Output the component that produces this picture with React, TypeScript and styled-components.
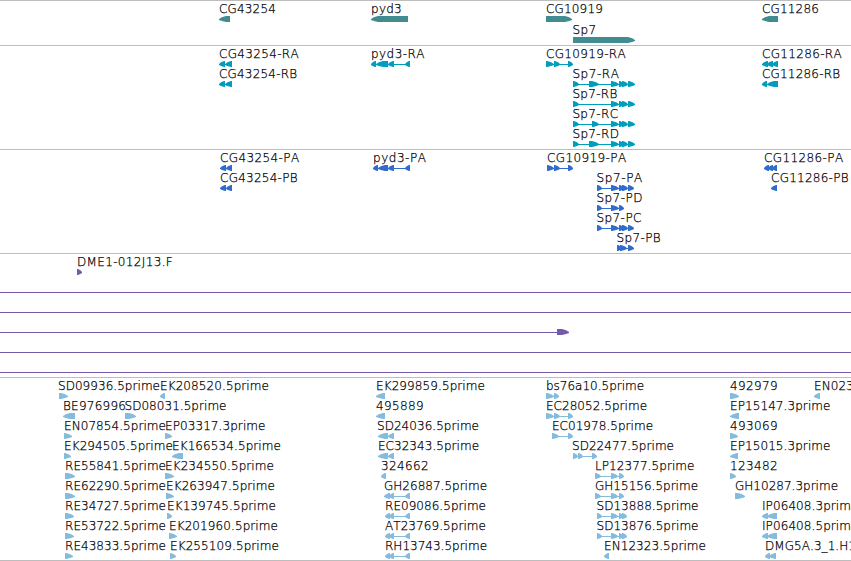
import React from "react";
import styled, { createGlobalStyle } from "styled-components";

type Direction = "left" | "right";
type Exon = [number, number];

interface Feature {
  name?: string;
  at: number;
  dir: Direction;
  exons: Exon[];
  lineFrom?: number;
}

interface TrackData {
  id: string;
  color: string;
  height: number;
  pitch: number;
  rows: Feature[][];
}

const VIEW_WIDTH = 851;

const f = (name: string, at: number, dir: Direction, exons: Exon[]): Feature => ({
  name,
  at,
  dir,
  exons,
});

const through: Feature = { at: 0, dir: "right", exons: [], lineFrom: 0 };

const tracks: TrackData[] = [
  {
    id: "gene",
    color: "#408c91",
    height: 45,
    pitch: 21,
    rows: [
      [
        f("CG43254", 219, "left", [[219, 230]]),
        f("pyd3", 371, "left", [[371, 408]]),
        f("CG10919", 546, "right", [[546, 572]]),
        f("CG11286", 762, "left", [[762, 778]]),
      ],
      [f("Sp7", 572.4, "right", [[573, 635]])],
    ],
  },
  {
    id: "transcript",
    color: "#009dbc",
    height: 104,
    pitch: 20,
    rows: [
      [
        f("CG43254-RA", 219, "left", [[219, 225], [225, 232]]),
        f("pyd3-RA", 371, "left", [[371, 376], [376, 388], [388, 394], [405, 410]]),
        f("CG10919-RA", 546, "right", [[546, 554], [554, 560], [568, 573]]),
        f("CG11286-RA", 762, "left", [[762, 768], [767, 773], [772, 778]]),
      ],
      [
        f("CG43254-RB", 219, "left", [[219, 225], [225, 232]]),
        f("Sp7-RA", 572.4, "right", [[573, 579], [589, 599], [611, 619], [619, 624], [622, 628], [628, 635]]),
        f("CG11286-RB", 762, "left", [[762, 767], [767, 778]]),
      ],
      [f("Sp7-RB", 572.4, "right", [[573, 579], [611, 619], [619, 624], [622, 628], [628, 635]])],
      [f("Sp7-RC", 572.4, "right", [[573, 579], [592, 599], [611, 619], [619, 624], [622, 628], [628, 635]])],
      [f("Sp7-RD", 572.4, "right", [[573, 579], [589, 599], [611, 619], [619, 624], [622, 628], [628, 635]])],
    ],
  },
  {
    id: "protein",
    color: "#316bcb",
    height: 104,
    pitch: 20,
    rows: [
      [
        f("CG43254-PA", 220, "left", [[220, 226], [226, 232]]),
        f("pyd3-PA", 373, "left", [[373, 378], [378, 388], [388, 394], [405, 410]]),
        f("CG10919-PA", 547, "right", [[547, 554], [554, 560], [568, 573]]),
        f("CG11286-PA", 764, "left", [[764, 769], [768, 773], [772, 777]]),
      ],
      [
        f("CG43254-PB", 220, "left", [[220, 226], [226, 232]]),
        f("Sp7-PA", 596.4, "right", [[597, 602], [611, 619], [619, 624], [622, 628], [628, 634]]),
        f("CG11286-PB", 771, "left", [[771, 777]]),
      ],
      [f("Sp7-PD", 596.4, "right", [[597, 602], [611, 619], [619, 624]])],
      [f("Sp7-PC", 596.4, "right", [[597, 602], [611, 619], [619, 624], [622, 628], [628, 634]])],
      [f("Sp7-PB", 616.4, "right", [[617, 622], [620, 627], [628, 634]])],
    ],
  },
  {
    id: "bac",
    color: "#7659aa",
    height: 124,
    pitch: 20,
    rows: [
      [f("DME1-012J13.F", 77, "right", [[77, 82]])],
      [through],
      [through],
      [{ at: 0, dir: "right", exons: [[557, 569]], lineFrom: 0 }],
      [through],
      [through],
    ],
  },
  {
    id: "est",
    color: "#85bbdd",
    height: 183,
    pitch: 20,
    rows: [
      [
        f("SD09936.5prime", 58, "right", [[59, 68]]),
        f("EK208520.5prime", 160, "left", [[160, 165]]),
        f("EK299859.5prime", 376, "left", [[376, 385]]),
        f("bs76a10.5prime", 546, "right", [[546, 554], [554, 559]]),
        f("492979", 730, "right", [[730, 739]]),
        f("EN02344.3prime", 814, "left", [[814, 820]]),
      ],
      [
        f("BE976996", 63, "left", [[63, 75]]),
        f("SD08031.5prime", 124.5, "right", [[125, 136]]),
        f("495889", 376, "left", [[376, 385]]),
        f("EC28052.5prime", 546, "right", [[546, 554], [554, 560], [568, 573]]),
        f("EP15147.3prime", 730, "left", [[730, 739]]),
      ],
      [
        f("EN07854.5prime", 64, "right", [[64, 72]]),
        f("EP03317.3prime", 165, "right", [[165, 172]]),
        f("SD24036.5prime", 377, "left", [[378, 388], [388, 394]]),
        f("EC01978.5prime", 552, "right", [[552, 559], [568, 573]]),
        f("493069", 730, "right", [[730, 738]]),
      ],
      [
        f("EK294505.5prime", 64, "right", [[64, 71]]),
        f("EK166534.5prime", 172, "left", [[172, 183]]),
        f("EC32343.5prime", 378, "left", [[378, 388], [388, 394]]),
        f("SD22477.5prime", 572, "right", [[573, 578], [578, 583], [592, 597]]),
        f("EP15015.3prime", 730, "left", [[730, 738]]),
      ],
      [
        f("RE55841.5prime", 65, "right", [[65, 75]]),
        f("EK234550.5prime", 165, "right", [[165, 174]]),
        f("324662", 381, "left", [[381, 386]]),
        f("LP12377.5prime", 595, "right", [[595, 601], [611, 618], [619, 624]]),
        f("123482", 730, "right", [[730, 736]]),
      ],
      [
        f("RE62290.5prime", 65, "right", [[65, 75]]),
        f("EK263947.5prime", 166, "right", [[166, 174]]),
        f("GH26887.5prime", 384, "left", [[384, 390], [389, 394], [405, 410]]),
        f("GH15156.5prime", 595, "right", [[595, 601], [611, 618], [619, 624]]),
        f("GH10287.3prime", 735, "right", [[735, 745]]),
      ],
      [
        f("RE34727.5prime", 65, "right", [[65, 74]]),
        f("EK139745.5prime", 167, "right", [[167, 172]]),
        f("RE09086.5prime", 385, "left", [[385, 390], [389, 394], [405, 410]]),
        f("SD13888.5prime", 596.5, "right", [[597, 602], [611, 618], [619, 623], [622, 627]]),
        f("IP06408.3prime", 762, "left", [[762, 768], [767, 777]]),
      ],
      [
        f("RE53722.5prime", 65, "right", [[65, 74]]),
        f("EK201960.5prime", 169, "right", [[169, 177]]),
        f("AT23769.5prime", 385, "left", [[385, 390], [389, 394], [405, 410]]),
        f("SD13876.5prime", 596.5, "right", [[597, 602], [611, 618], [619, 623], [622, 627]]),
        f("IP06408.5prime", 762, "left", [[762, 768], [767, 777]]),
      ],
      [
        f("RE43833.5prime", 65, "right", [[65, 73]]),
        f("EK255109.5prime", 170, "right", [[170, 176]]),
        f("RH13743.5prime", 385, "left", [[385, 390], [389, 394], [405, 410]]),
        f("EN12323.5prime", 604, "left", [[604, 609]]),
        f("DMG5A.3_1.H1", 765, "left", [[765, 770], [769, 776]]),
      ],
    ],
  },
];

const GlobalStyle = createGlobalStyle`
  html, body {
    margin: 0;
    background: #fff;
    overflow: hidden;
  }
`;

const Viewer = styled.main`
  display: flex;
  flex-direction: column;
  width: ${VIEW_WIDTH}px;
  height: 561px;
  overflow: hidden;
  background: #fff;
  border-bottom: 1px solid #bdbdbd;
  box-sizing: border-box;
  font-family: "DejaVu Sans", sans-serif;
  font-size: 12px;
  font-weight: 200;
  font-kerning: none;
  color: #000;
`;

const Track = styled.section<{ $height: number; $color: string }>`
  flex: none;
  box-sizing: border-box;
  height: ${(p) => p.$height}px;
  border-top: 1px solid #bdbdbd;
  color: ${(p) => p.$color};
`;

const Row = styled.div<{ $pitch: number }>`
  position: relative;
  height: ${(p) => p.$pitch}px;
`;

const FeatureBox = styled.div<{ $x: number }>`
  position: absolute;
  left: ${(p) => p.$x}px;
  top: 0;
  display: flex;
  flex-direction: column;
`;

const Label = styled.span<{ $spacing: number; $shift: number }>`
  box-sizing: border-box;
  height: 15px;
  padding-top: 1px;
  padding-left: ${(p) => p.$shift}px;
  line-height: 15px;
  white-space: pre;
  color: #000;
  -webkit-text-stroke: 0.25px #000;
  letter-spacing: ${(p) => p.$spacing}px;
`;

const Glyph = styled.svg`
  display: block;
  overflow: visible;
`;

const ADVANCE: Record<string, [number, number]> = {
  "-": [6, 4.33], ".": [4, 3.81], _: [5, 6], A: [9, 8.21], B: [7.6, 8.23], C: [8, 8.38], D: [9, 9.24],
  E: [8, 7.58], F: [7, 6.9], G: [9, 9.3], H: [9, 9.02], I: [4, 3.54], J: [4, 3.54], K: [8, 7.87],
  L: [7, 6.69], M: [10, 10.36], N: [9, 8.98], P: [7.5, 7.24], R: [8, 8.34], S: [8, 7.62], T: [7, 7.33],
  a: [7, 7.35], b: [8, 7.62], d: [8, 7.62], e: [7, 7.38], i: [3, 3.33], m: [10, 11.69], p: [8, 7.62],
  r: [5, 4.93], s: [6, 6.25], y: [7, 7.1],
};

function spacingFor(text: string): number {
  let diff = 0;
  for (const ch of text) {
    const [hinted, natural] = ADVANCE[ch] ?? [8, 7.63];
    diff += hinted - natural;
  }
  return Math.round((diff / text.length) * 1000) / 1000;
}

function exonPath([start, end]: Exon, dir: Direction, origin: number): string {
  const a = start - origin;
  const b = end - origin;
  const head = Math.min(b - a - 1, 7);
  const shoulder = head * 0.4;
  if (dir === "right") {
    return `M${a} 0H${b - head}L${b - shoulder} 1.3L${b} 3V4L${b - shoulder} 5L${b - head} 6H${a}Z`;
  }
  return `M${b} 0H${a + head}L${a + shoulder} 1.3L${a} 3V4L${a + shoulder} 5L${a + head} 6H${b}Z`;
}

function FeatureView({ feature }: { feature: Feature }) {
  const { name, at, dir, exons, lineFrom } = feature;
  const origin = Math.floor(at);
  const last = exons.length ? exons[exons.length - 1][1] : VIEW_WIDTH;
  const first = lineFrom ?? exons[0][0];
  const hasLine = exons.length !== 1 || lineFrom !== undefined;
  return (
    <FeatureBox $x={origin}>
      <Label $spacing={name ? spacingFor(name) : 0} $shift={at - origin}>
        {name}
      </Label>
      <Glyph width={Math.max(1, last - origin)} height={6} fill="currentColor">
        {hasLine && <rect x={first - origin} y={3} width={last - first} height={1} />}
        {exons.map((exon) => (
          <path key={exon[0]} d={exonPath(exon, dir, origin)} />
        ))}
      </Glyph>
    </FeatureBox>
  );
}

export default function App() {
  return (
    <>
      <GlobalStyle />
      <Viewer>
        {tracks.map((track) => (
          <Track key={track.id} $height={track.height} $color={track.color}>
            {track.rows.map((row, r) => (
              <Row key={r} $pitch={track.pitch}>
                {row.map((feature) => (
                  <FeatureView key={feature.name ?? "span"} feature={feature} />
                ))}
              </Row>
            ))}
          </Track>
        ))}
      </Viewer>
    </>
  );
}
